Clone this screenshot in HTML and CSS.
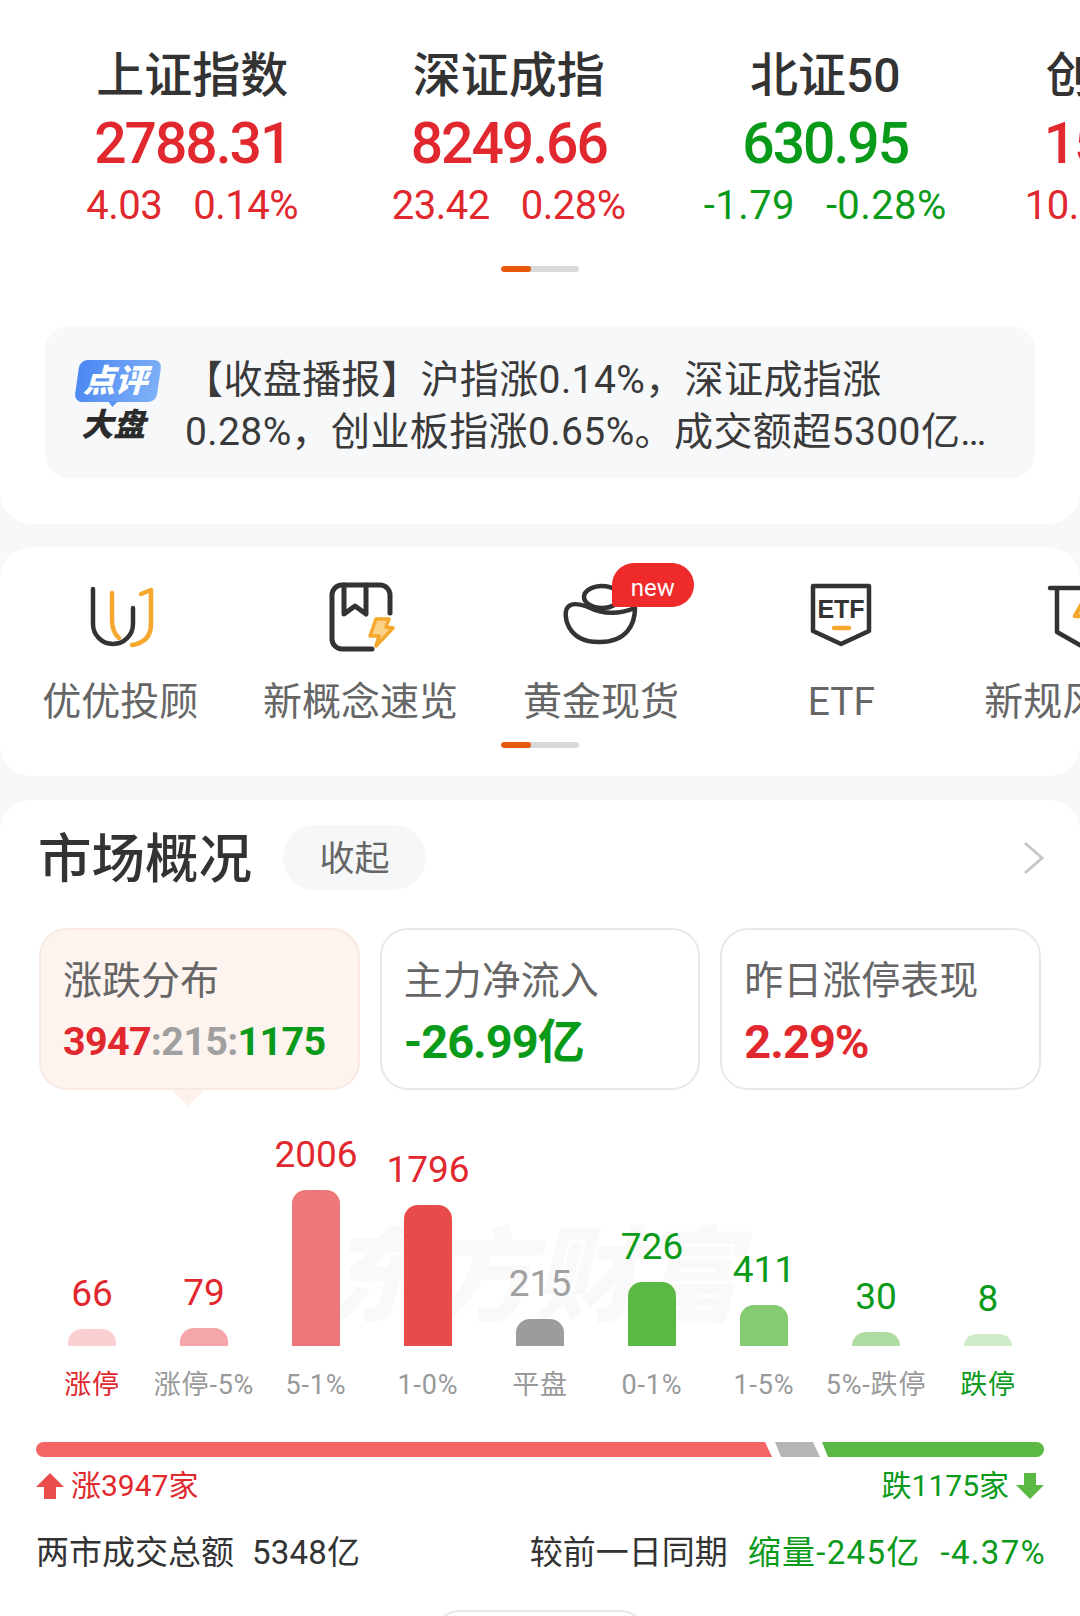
FILE: index.html
```html
<!DOCTYPE html>
<html lang="zh-CN">
<head>
  <meta charset="UTF-8" />
  <title>市场概况</title>
  <link rel="stylesheet" href="styles.css">
</head>
<body>
  <section class="card index-card">
    <div class="index-row">
      <div class="index-item">
        <div class="index-name">上证指数</div>
        <div class="index-price up">2788.31</div>
        <div class="index-change up"><span>4.03</span><span>0.14%</span></div>
      </div>
      <div class="index-item">
        <div class="index-name">深证成指</div>
        <div class="index-price up">8249.66</div>
        <div class="index-change up"><span>23.42</span><span>0.28%</span></div>
      </div>
      <div class="index-item">
        <div class="index-name">北证50</div>
        <div class="index-price down">630.95</div>
        <div class="index-change down"><span>-1.79</span><span>-0.28%</span></div>
      </div>
      <div class="index-item">
        <div class="index-name">创业板指</div>
        <div class="index-price up">1598.32</div>
        <div class="index-change up"><span>10.27</span><span>0.65%</span></div>
      </div>
    </div>
    <div class="scroll-bar index-scroll"></div>

    <div class="notice">
      <div class="notice-logo">
        <div class="logo-bubble"><span>点评</span></div>
        <div class="logo-word">大盘</div>
      </div>
      <div class="notice-text">
        <div class="notice-first">【收盘播报】沪指涨0.14%，深证成指涨</div>
        <div>0.28%，创业板指涨0.65%。成交额超5300亿…</div>
      </div>
    </div>
  </section>

  <section class="card menu-card">
    <div class="menu-row">
      <div class="menu-item">
        <svg class="menu-icon" viewBox="-5 0 80 80" fill="none" stroke-linecap="round" stroke-linejoin="round">
          <path d="M8 9V44a20 20 0 0 0 40 0V28" stroke="#333" stroke-width="4.5"/>
          <path d="M27 13V40Q27 52 34 58" stroke="#f5a82d" stroke-width="4.5"/>
          <path d="M56 14L66 10V44Q66 62 47 65" stroke="#f5a82d" stroke-width="4.5"/>
        </svg>
        <div class="menu-label">优优投顾</div>
      </div>
      <div class="menu-item">
        <svg class="menu-icon" viewBox="-5 0 80 80" fill="none" stroke-linecap="round" stroke-linejoin="round">
          <path d="M64 33V15a10 10 0 0 0-10-10H16a10 10 0 0 0-10 10V59a10 10 0 0 0 10 10H46" stroke="#333" stroke-width="5"/>
          <path d="M18 5V34L29 26L40 34V5" stroke="#333" stroke-width="5"/>
          <path d="M50 39H63L60 47L67 48L50 66L53 56H44Z" stroke="#f5a82d" stroke-width="3.5" fill="#fbd288"/>
        </svg>
        <div class="menu-label">新概念速览</div>
      </div>
      <div class="menu-item">
        <svg class="menu-icon" viewBox="1 0 80 80" fill="none" stroke-linecap="round" stroke-linejoin="round">
          <ellipse cx="42" cy="17" rx="18" ry="11" stroke="#333" stroke-width="4.5"/>
          <path d="M28 27C20 24 12 22 8 27C2 33 6 63 40 62C66 62 75 45 75 28Q50 38 28 27Z" stroke="#333" stroke-width="4.5" fill="#fff"/>
        </svg>
        <span class="badge-new">new</span>
        <div class="menu-label">黄金现货</div>
      </div>
      <div class="menu-item">
        <svg class="menu-icon" viewBox="-5 0 80 80" fill="none" stroke-linecap="round" stroke-linejoin="round">
          <path d="M7 6H63V51L35 64L7 51Z" stroke="#333" stroke-width="4.5"/>
          <text x="35" y="38" text-anchor="middle" class="etf-text">ETF</text>
          <path d="M28 48H43" stroke="#f5a82d" stroke-width="4.5"/>
        </svg>
        <div class="menu-label">ETF</div>
      </div>
      <div class="menu-item">
        <svg class="menu-icon" viewBox="-5 0 80 80" fill="none" stroke-linecap="round" stroke-linejoin="round">
          <path d="M3 8H70M10 8V52L38 68" stroke="#333" stroke-width="4.5"/>
          <path d="M36 22L28 36H38" stroke="#f5a82d" stroke-width="4.5"/>
        </svg>
        <div class="menu-label">新规风向标</div>
      </div>
    </div>
    <div class="scroll-bar menu-scroll"></div>
  </section>

  <section class="card market-card">
    <div class="market-head">
      <h2 class="market-title">市场概况</h2>
      <div class="collapse-pill">收起</div>
      <svg class="chevron" viewBox="0 0 21 34" fill="none">
        <path d="M2 2L19 17L2 32" stroke="#c8c8c8" stroke-width="3"/>
      </svg>
    </div>

    <div class="stat-row">
      <div class="stat-box active">
        <div class="stat-label">涨跌分布</div>
        <div class="stat-value small"><span class="up">3947</span><span class="flat">:215:</span><span class="down">1175</span></div>
      </div>
      <div class="stat-box">
        <div class="stat-label">主力净流入</div>
        <div class="stat-value down">-26.99亿</div>
      </div>
      <div class="stat-box">
        <div class="stat-label">昨日涨停表现</div>
        <div class="stat-value up">2.29%</div>
      </div>
    </div>

    <div class="chart">
      <div class="watermark">东方财富</div>
      <div class="chart-col">
        <div class="chart-num up">66</div>
        <div class="chart-bar" style="height:17px;background:#fad0d3"></div>
        <div class="chart-label up">涨停</div>
      </div>
      <div class="chart-col">
        <div class="chart-num up">79</div>
        <div class="chart-bar" style="height:18px;background:#f4a6ab"></div>
        <div class="chart-label">涨停-5%</div>
      </div>
      <div class="chart-col">
        <div class="chart-num up">2006</div>
        <div class="chart-bar" style="height:156px;background:#ee7779"></div>
        <div class="chart-label">5-1%</div>
      </div>
      <div class="chart-col">
        <div class="chart-num up">1796</div>
        <div class="chart-bar" style="height:141px;background:#e94b4b"></div>
        <div class="chart-label">1-0%</div>
      </div>
      <div class="chart-col">
        <div class="chart-num flat">215</div>
        <div class="chart-bar" style="height:27px;background:#9c9c9c"></div>
        <div class="chart-label">平盘</div>
      </div>
      <div class="chart-col">
        <div class="chart-num down">726</div>
        <div class="chart-bar" style="height:64px;background:#5cb845"></div>
        <div class="chart-label">0-1%</div>
      </div>
      <div class="chart-col">
        <div class="chart-num down">411</div>
        <div class="chart-bar" style="height:41px;background:#84cb72"></div>
        <div class="chart-label">1-5%</div>
      </div>
      <div class="chart-col">
        <div class="chart-num down">30</div>
        <div class="chart-bar" style="height:14px;background:#aedba2"></div>
        <div class="chart-label">5%-跌停</div>
      </div>
      <div class="chart-col">
        <div class="chart-num down">8</div>
        <div class="chart-bar" style="height:12px;background:#d0ebc9"></div>
        <div class="chart-label down">跌停</div>
      </div>
    </div>

    <div class="split-bar">
      <div class="split-up"></div>
      <div class="split-flat"></div>
      <div class="split-down"></div>
    </div>

    <div class="legend">
      <div class="legend-side up">
        <svg class="legend-arrow" viewBox="0 0 28 26"><path d="M14 0L28 14H20V26H8V14H0Z" fill="#ea4c4c"/></svg>
        <span>涨3947家</span>
      </div>
      <div class="legend-side down">
        <span>跌1175家</span>
        <svg class="legend-arrow" viewBox="0 0 28 26"><path d="M14 26L28 12H20V0H8V12H0Z" fill="#5cb845"/></svg>
      </div>
    </div>

    <div class="volume">
      <div class="volume-side"><span>两市成交总额</span><span class="volume-total">5348亿</span></div>
      <div class="volume-side">
        <span>较前一日同期</span>
        <span class="down volume-num">缩量-245亿</span>
        <span class="down volume-num">-4.37%</span>
      </div>
    </div>

    <div class="more-btn"></div>
  </section>
</body>
</html>
```

FILE: styles.css
```css
* {
  box-sizing: border-box;
}
body {
  margin: 0;
  width: 1080px;
  height: 1616px;
  overflow: hidden;
  background: #f8f8fa;
  font-family: Roboto, "Noto Sans CJK SC", sans-serif;
  color: #333;
}
.up {
  color: #e0282e;
}
.down {
  color: #0a9a1a;
}
.flat {
  color: #a0a0a0;
}
.card {
  background: #fff;
  border-radius: 32px;
  overflow: hidden;
}
.scroll-bar {
  width: 78px;
  height: 6px;
  border-radius: 3px;
  background: #d9d9d9;
  margin-left: auto;
  margin-right: auto;
  overflow: hidden;
}
.scroll-bar::before {
  content: "";
  display: block;
  width: 30px;
  height: 6px;
  border-radius: 3px;
  background: #e8590c;
}

/* index strip */
.index-card {
  height: 524px;
  padding-top: 46px;
  border-radius: 0 0 32px 32px;
}
.index-row {
  display: flex;
  margin-left: 34px;
  width: 1300px;
}
.index-item {
  flex: 0 0 316.5px;
  text-align: center;
}
.index-name {
  font-size: 48px;
  line-height: 60px;
  font-weight: 500;
  color: #333;
}
.index-price {
  font-size: 57px;
  line-height: 76px;
  font-weight: 500;
  letter-spacing: -2px;
}
.index-change {
  font-size: 40px;
  line-height: 44px;
  margin-top: 2px;
  display: flex;
  justify-content: center;
  gap: 31px;
  letter-spacing: -0.5px;
}
.index-change.down {
  letter-spacing: 0.4px;
}
.index-scroll {
  margin-top: 38px;
}
.notice {
  margin: 54px 45px 0;
  height: 152px;
  background: #f7f8fa;
  border-radius: 24px;
  display: flex;
  align-items: center;
}
.notice-logo {
  width: 86px;
  margin-left: 31px;
}
.logo-bubble {
  position: relative;
  width: 82px;
  height: 42px;
  margin-left: 1px;
  border-radius: 8px;
  background: linear-gradient(100deg, #4a86f2, #7fb2f8);
  transform: skewX(-8deg);
  color: #fff;
  font-size: 32px;
  line-height: 42px;
  font-weight: 900;
  text-align: center;
}
.logo-bubble span {
  display: block;
  transform: skewX(-8deg);
}
.logo-bubble::after {
  content: "";
  position: absolute;
  left: 34px;
  bottom: -5px;
  border-left: 5px solid transparent;
  border-right: 5px solid transparent;
  border-top: 6px solid #5a93f4;
}
.logo-word {
  font-size: 32px;
  line-height: 38px;
  margin-top: 4px;
  margin-right: 6px;
  font-weight: 900;
  color: #2b2b2b;
  text-align: center;
  transform: skewX(-14deg);
}
.notice-text {
  margin-left: 23px;
  padding-top: 8px;
  font-size: 39px;
  line-height: 52px;
  letter-spacing: 0.4px;
  color: #3a3a3a;
  white-space: nowrap;
}
.notice-first {
  margin-left: -1px;
}

/* shortcut menu */
.menu-card {
  margin-top: 23px;
  height: 229px;
  padding-top: 33px;
}
.menu-row {
  display: flex;
  width: 1300px;
}
.menu-item {
  position: relative;
  flex: 0 0 240.4px;
  display: flex;
  flex-direction: column;
  align-items: center;
}
.menu-icon {
  width: 80px;
  height: 80px;
}
.menu-label {
  margin-top: 17px;
  font-size: 39px;
  line-height: 50px;
  color: #666;
  white-space: nowrap;
}
.badge-new {
  position: absolute;
  top: -17px;
  left: 131px;
  width: 82px;
  height: 44px;
  border-radius: 22px 22px 22px 4px;
  background: #ee2a2a;
  color: #fff;
  font-size: 24px;
  line-height: 50px;
  text-align: center;
}
.etf-text {
  font-family: "Liberation Sans", sans-serif;
  font-size: 25px;
  font-weight: 700;
  fill: #333;
}
.menu-scroll {
  margin-top: 15px;
}

/* market overview */
.market-card {
  margin-top: 24px;
  height: 816px;
  border-radius: 32px 32px 0 0;
}
.market-head {
  display: flex;
  align-items: center;
  padding: 25px 36px 0 38px;
}
.market-title {
  margin: 0;
  padding-top: 5px;
  font-size: 53.5px;
  line-height: 60px;
  font-weight: 500;
  color: #333;
}
.collapse-pill {
  margin-left: 31px;
  width: 143px;
  height: 65px;
  border-radius: 32px;
  background: #f6f7f9;
  color: #666;
  font-size: 35px;
  line-height: 69px;
  text-align: center;
}
.chevron {
  margin-left: auto;
  width: 21px;
  height: 34px;
}
.stat-row {
  display: flex;
  gap: 20px;
  margin: 38px 39px 0;
}
.stat-box {
  position: relative;
  flex: 1;
  height: 162px;
  padding: 26px 0 0 22px;
  border: 2px solid #e8e8e8;
  border-radius: 28px;
}
.stat-box.active {
  background: #fdf4f0;
  border-color: #fae9e2;
}
.stat-box.active::after {
  content: "";
  position: absolute;
  left: 131px;
  bottom: -18px;
  border-left: 16px solid transparent;
  border-right: 16px solid transparent;
  border-top: 16px solid #fdf1ec;
}
.stat-label {
  font-size: 39px;
  line-height: 50px;
  color: #666;
}
.stat-value {
  margin-top: 8px;
  font-size: 47px;
  line-height: 56px;
  font-weight: 700;
  letter-spacing: -1px;
}
.stat-value.small {
  font-size: 39.5px;
  letter-spacing: -0.7px;
}

/* distribution chart */
.chart {
  position: relative;
  display: grid;
  grid-template-columns: repeat(9, 112px);
  height: 315px;
  margin-left: 36px;
  align-items: end;
}
.watermark {
  position: absolute;
  left: 291px;
  top: 128px;
  font-size: 103px;
  line-height: 120px;
  font-weight: 900;
  font-style: italic;
  color: #f9f9f9;
  white-space: nowrap;
}
.chart-col {
  position: relative;
  display: flex;
  flex-direction: column;
  align-items: center;
}
.chart-num {
  font-size: 37px;
  line-height: 36px;
  margin-bottom: 17px;
}
.chart-bar {
  width: 48px;
  border-radius: 14px 14px 0 0;
}
.chart-label {
  margin-top: 19px;
  font-size: 27px;
  line-height: 40px;
  letter-spacing: 0.8px;
  color: #999;
  white-space: nowrap;
}
.chart-label.up {
  color: #e0282e;
}
.chart-label.down {
  color: #0a9a1a;
}
.split-bar {
  display: flex;
  height: 15px;
  margin: 37px 36px 0;
}
.split-up {
  width: 736px;
  background: #f66565;
  border-radius: 8px 0 0 8px;
  clip-path: polygon(0 0, 729px 0, 100% 100%, 0 100%);
}
.split-flat {
  width: 45px;
  margin-left: 3px;
  background: #b5b5b5;
  clip-path: polygon(0 0, 38px 0, 100% 100%, 6px 100%);
}
.split-down {
  flex: 1;
  margin-left: 2px;
  background: #5cb845;
  border-radius: 0 8px 8px 0;
  clip-path: polygon(0 0, 100% 0, 100% 100%, 6px 100%);
}
.legend {
  display: flex;
  justify-content: space-between;
  margin: 9px 36px 0;
  font-size: 30px;
  line-height: 40px;
}
.legend-side {
  display: flex;
  align-items: center;
  gap: 7px;
}
.legend-arrow {
  width: 28px;
  height: 26px;
}
.volume {
  display: flex;
  justify-content: space-between;
  margin: 25px 34px 0 36px;
  font-size: 33px;
  line-height: 44px;
  color: #333;
}
.volume-side {
  display: flex;
  gap: 20px;
}
.volume-total {
  margin-left: -2px;
  letter-spacing: 0.2px;
}
.volume-num {
  letter-spacing: 1.3px;
}
.more-btn {
  width: 210px;
  height: 60px;
  margin: 35px auto 0;
  border: 2px solid #e8e8e8;
  border-radius: 24px;
}
```
